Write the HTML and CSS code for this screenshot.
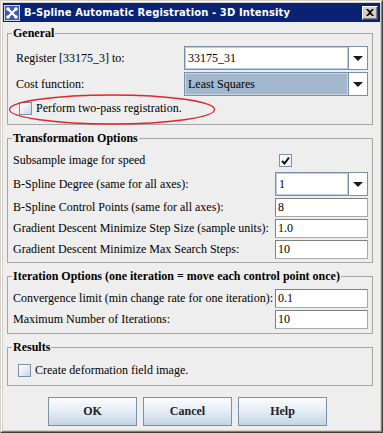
FILE: index.html
```html
<!DOCTYPE html>
<html lang="en">
<head>
  <meta charset="UTF-8" />
  <title>B-Spline Automatic Registration - 3D Intensity</title>
  <link rel="stylesheet" href="styles.css">
</head>
<body>

  <div class="window">
    <div class="frame">

      <!-- Title Bar -->
      <div class="titlebar">
        <span class="app-icon">
          <svg width="16" height="16" viewBox="0 0 16 16">
            <rect x="0.5" y="0.5" width="15" height="15" fill="#3d5ba6" stroke="#c9d6ee"/>
            <path d="M4 4 L12 12 M12 4 L4 12" stroke="#ffffff" stroke-width="2.2"/>
            <circle cx="4" cy="4" r="1.8" fill="#ffffff"/>
            <circle cx="12" cy="4" r="1.8" fill="#ffffff"/>
            <circle cx="4" cy="12" r="1.8" fill="#ffffff"/>
            <circle cx="12" cy="12" r="1.8" fill="#ffffff"/>
          </svg>
        </span>
        <span class="title">B-Spline Automatic Registration - 3D Intensity</span>
        <span class="close-btn">
          <svg width="8" height="7" viewBox="0 0 8 7">
            <path d="M0 0 L2 0 L4 2 L6 0 L8 0 L5 3.5 L8 7 L6 7 L4 5 L2 7 L0 7 L3 3.5 Z" fill="#000"/>
          </svg>
        </span>
      </div>

      <div class="content">

        <!-- General -->
        <fieldset class="group general">
          <legend>General</legend>
          <div class="rows">
            <div class="row tall">
              <span class="label">Register [33175_3] to:</span>
              <div class="combo wide focused">
                <span class="combo-value">33175_31</span>
                <span class="combo-arrow"><i class="tri"></i></span>
              </div>
            </div>
            <div class="row tall">
              <span class="label">Cost function:</span>
              <div class="combo wide selected">
                <span class="combo-value">Least Squares</span>
                <span class="combo-arrow"><i class="tri"></i></span>
              </div>
            </div>
            <div class="row check-row">
              <span class="checkbox"></span>
              <span class="check-label">Perform two-pass registration.</span>
            </div>
          </div>
        </fieldset>

        <!-- Transformation Options -->
        <fieldset class="group transform">
          <legend>Transformation Options</legend>
          <div class="rows">
            <div class="row">
              <span class="label">Subsample image for speed</span>
              <span class="check-cell">
                <span class="checkbox checked">
                  <svg width="11" height="11" viewBox="0 0 11 11">
                    <path d="M2 6 L4.5 8.5 L9 2.5" stroke="#111" stroke-width="2" fill="none"/>
                  </svg>
                </span>
              </span>
            </div>
            <div class="row tall">
              <span class="label">B-Spline Degree (same for all axes):</span>
              <div class="combo narrow focused">
                <span class="combo-value">1</span>
                <span class="combo-arrow"><i class="tri"></i></span>
              </div>
            </div>
            <div class="row">
              <span class="label">B-Spline Control Points (same for all axes):</span>
              <span class="text-field">8</span>
            </div>
            <div class="row">
              <span class="label">Gradient Descent Minimize Step Size (sample units):</span>
              <span class="text-field">1.0</span>
            </div>
            <div class="row">
              <span class="label">Gradient Descent Minimize Max Search Steps:</span>
              <span class="text-field">10</span>
            </div>
          </div>
        </fieldset>

        <!-- Iteration Options -->
        <fieldset class="group iteration">
          <legend>Iteration Options (one iteration = move each control point once)</legend>
          <div class="rows">
            <div class="row">
              <span class="label">Convergence limit (min change rate for one iteration):</span>
              <span class="text-field">0.1</span>
            </div>
            <div class="row">
              <span class="label">Maximum Number of Iterations:</span>
              <span class="text-field">10</span>
            </div>
          </div>
        </fieldset>

        <!-- Results -->
        <fieldset class="group results">
          <legend>Results</legend>
          <div class="rows">
            <div class="row check-row">
              <span class="checkbox"></span>
              <span class="check-label">Create deformation field image.</span>
            </div>
          </div>
        </fieldset>

        <div class="buttons">
          <button class="btn">OK</button>
          <button class="btn">Cancel</button>
          <button class="btn">Help</button>
        </div>

      </div>
    </div>

    <!-- red annotation ring -->
    <svg class="highlight" width="208" height="33" viewBox="0 0 208 33">
      <ellipse cx="104" cy="16.5" rx="102.5" ry="14.5" fill="none" stroke="#e3242b" stroke-width="1.3"/>
    </svg>
  </div>

</body>
</html>
```

FILE: styles.css
```css
* {
  box-sizing: border-box;
  margin: 0;
  padding: 0;
}

body {
  background: #ffffff;
  font-family: 'Liberation Serif', 'Times New Roman', serif;
  font-size: 12px;
  color: #000;
}

/* Window frame */
.window {
  position: relative;
  width: 383px;
  height: 433px;
  border: 1px solid;
  border-color: #d4d0c8 #404040 #404040 #d4d0c8;
}

.frame {
  height: 100%;
  display: flex;
  flex-direction: column;
  border: 1px solid;
  border-color: #ffffff #808080 #808080 #ffffff;
  background: #d4d0c8;
  padding: 1px;
}

.titlebar {
  height: 19px;
  display: flex;
  align-items: center;
  background: #0a2273;
  padding: 0 2px 0 1px;
}

.app-icon {
  width: 16px;
  height: 16px;
  display: flex;
}

.title {
  flex: 1;
  margin-left: 4px;
  color: #ffffff;
  font-family: 'DejaVu Sans', 'Liberation Sans', sans-serif;
  font-weight: bold;
  font-size: 10px;
  letter-spacing: 0.1px;
}

.close-btn {
  width: 16px;
  height: 14px;
  display: flex;
  align-items: center;
  justify-content: center;
  background: #d4d0c8;
  border: 1px solid;
  border-color: #ffffff #404040 #404040 #ffffff;
  box-shadow: inset -1px -1px 0 #808080;
}

/* Dialog body */
.content {
  flex: 1;
  background: #eeeeee;
  padding: 4px 7px 0 4px;
  display: flex;
  flex-direction: column;
}

.group {
  border: 1px solid #a6a6a6;
  padding: 0 4px 6px 5px;
  min-width: 0;
}

.group + .group {
  margin-top: 6px;
}

.group legend {
  font-weight: bold;
  font-size: 12px;
  line-height: 15px;
  padding: 0 1px;
  margin-left: -1px;
}

.rows {
  display: flex;
  flex-direction: column;
  gap: 2px;
  padding-top: 5px;
}

.general .rows {
  padding-top: 5px;
}

.general .label {
  padding-left: 3px;
}

.transform {
  padding-bottom: 3px;
}

.iteration {
  padding-bottom: 4px;
}

.results {
  padding-bottom: 5px;
}

.row {
  display: flex;
  align-items: center;
  justify-content: space-between;
  height: 19px;
}

.row.tall {
  height: 24px;
}

.check-row {
  height: 20px;
  justify-content: flex-start;
  padding-left: 6px;
}

.results .check-row {
  padding-left: 5px;
}

.check-label {
  margin-left: 4px;
}

.check-cell {
  width: 93px;
  display: flex;
  padding-left: 4px;
}

.checkbox {
  width: 13px;
  height: 13px;
  display: flex;
  align-items: center;
  justify-content: center;
  border: 1px solid #7d92a8;
  background: linear-gradient(135deg, #ffffff 0%, #e6edf5 50%, #c6d4e3 100%);
}

.checkbox.checked {
  background: linear-gradient(135deg, #ffffff 0%, #e9eff6 100%);
}

/* Combo boxes */
.combo {
  height: 24px;
  display: flex;
  border: 1px solid #7b8fa6;
  background: #ffffff;
}

.combo.wide {
  width: 184px;
}

.combo.narrow {
  width: 93px;
}

.combo-value {
  flex: 1;
  display: flex;
  align-items: center;
  padding-left: 2px;
  border: 1px solid #ffffff;
}

.combo.focused .combo-value {
  border-color: #b9cfe6;
}

.combo.selected .combo-value {
  background: #a3b8cd;
  border-color: #c7d5e3;
}

.combo-arrow {
  width: 19px;
  display: flex;
  align-items: center;
  justify-content: center;
  border-left: 1px solid #7b8fa6;
  background: #ffffff;
}

.tri {
  width: 0;
  height: 0;
  border-left: 5px solid transparent;
  border-right: 5px solid transparent;
  border-top: 5px solid #1a1a1a;
}

/* Text fields */
.text-field {
  width: 93px;
  height: 19px;
  display: flex;
  align-items: center;
  padding-left: 2px;
  background: #ffffff;
  border: 1px solid;
  border-color: #7f7f7f #a9a9a9 #a9a9a9 #7f7f7f;
}

/* Buttons */
.buttons {
  display: flex;
  justify-content: center;
  gap: 6px;
  margin-top: 11px;
  padding-right: 5px;
}

.btn {
  width: 89px;
  height: 29px;
  font-family: 'Liberation Serif', 'Times New Roman', serif;
  font-weight: bold;
  font-size: 12px;
  color: #222;
  border: 1px solid #7b8fa6;
  background: linear-gradient(#fbfcfe, #e4ecf4 50%, #c5d4e3);
}

/* Annotation */
.highlight {
  position: absolute;
  left: 7px;
  top: 92px;
}
```
